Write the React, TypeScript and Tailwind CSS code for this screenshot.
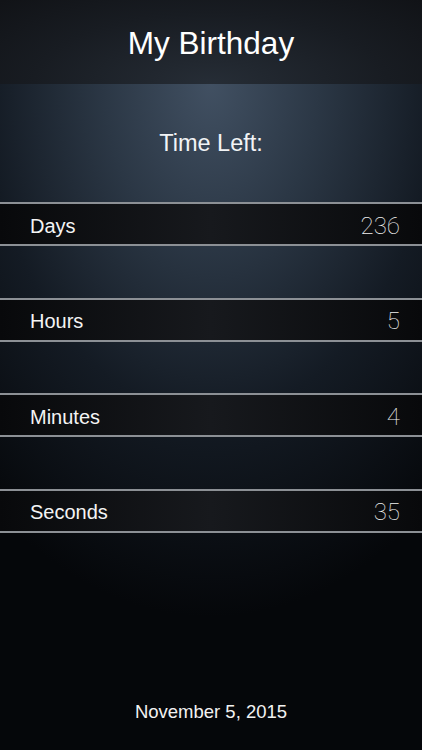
import React from "react";

const rows = [
  { label: "Days", value: "236" },
  { label: "Hours", value: "5" },
  { label: "Minutes", value: "4" },
  { label: "Seconds", value: "35" },
];

export default function App() {
  return (
    <div
      className="w-full h-[750px] flex flex-col overflow-hidden bg-[#05070a] text-white"
      style={{ fontFamily: "'Liberation Sans', Arial, sans-serif" }}
    >
      <header className="h-[84px] shrink-0 flex items-center justify-center pt-[3px] bg-[radial-gradient(ellipse_70%_140%_at_50%_100%,#262d36_0%,#181c22_60%,#111317_100%)]">
        <h1 className="text-[31.5px] leading-none text-white">My Birthday</h1>
      </header>
      <main className="flex-1 flex flex-col bg-[radial-gradient(ellipse_85%_80%_at_50%_0%,#415062_0%,#2b3745_30%,#141b24_62%,#05070a_100%)]">
        <div className="h-[118px] flex items-center justify-center pt-[2px]">
          <span className="text-[23.5px] text-[#f2f4f6]">Time Left:</span>
        </div>
        <div className="flex flex-col gap-[51.5px]">
          {rows.map((r) => (
            <div
              key={r.label}
              className="h-[44px] border-y-2 border-[#8c9095] flex items-center justify-between pl-[30px] pr-[22px] pt-[3px] bg-[linear-gradient(90deg,#08090b_0%,#17191d_50%,#08090b_100%)]"
            >
              <span className="text-[20px] text-[#f4f4f4]">{r.label}</span>
              <span
                className="text-[24px] font-light text-[#f0f0f0]"
                style={{ fontFamily: "Roboto, 'Liberation Sans', sans-serif", fontWeight: 250 }}
              >
                {r.value}
              </span>
            </div>
          ))}
        </div>
        <div className="mt-auto h-[76px] flex items-center justify-center">
          <span className="text-[18.5px] text-[#f2f2f2] leading-[24px]">November 5, 2015</span>
        </div>
      </main>
    </div>
  );
}
